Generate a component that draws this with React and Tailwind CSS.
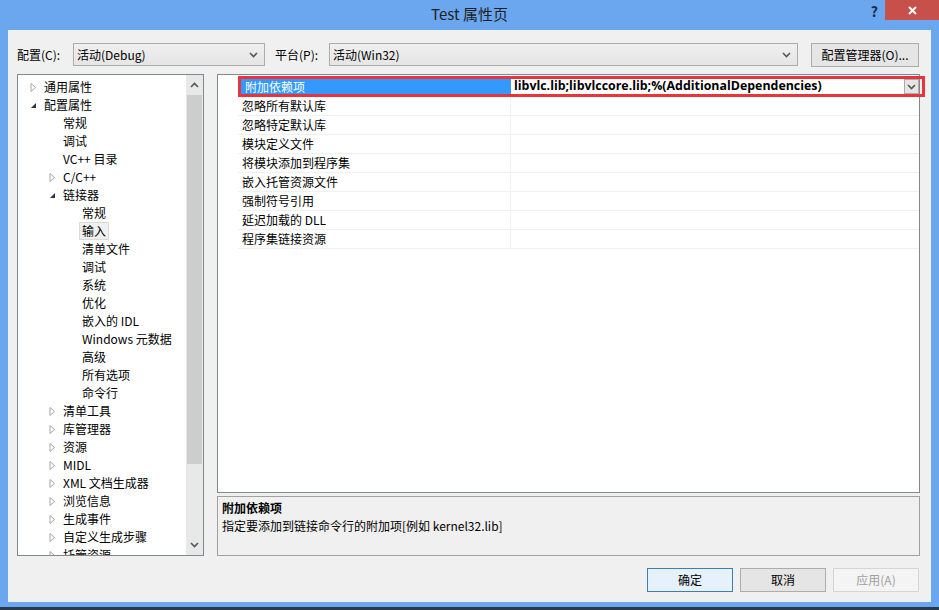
import React from 'react';

const font = { fontFamily: '"Noto Sans CJK SC", "Noto Sans", sans-serif' };

const treeItems = [
    { label: '通用属性', level: 0, arrow: 'closed' },
    { label: '配置属性', level: 0, arrow: 'open' },
    { label: '常规', level: 1 },
    { label: '调试', level: 1 },
    { label: 'VC++ 目录', level: 1 },
    { label: 'C/C++', level: 1, arrow: 'closed' },
    { label: '链接器', level: 1, arrow: 'open' },
    { label: '常规', level: 2 },
    { label: '输入', level: 2, selected: true },
    { label: '清单文件', level: 2 },
    { label: '调试', level: 2 },
    { label: '系统', level: 2 },
    { label: '优化', level: 2 },
    { label: '嵌入的 IDL', level: 2 },
    { label: 'Windows 元数据', level: 2 },
    { label: '高级', level: 2 },
    { label: '所有选项', level: 2 },
    { label: '命令行', level: 2 },
    { label: '清单工具', level: 1, arrow: 'closed' },
    { label: '库管理器', level: 1, arrow: 'closed' },
    { label: '资源', level: 1, arrow: 'closed' },
    { label: 'MIDL', level: 1, arrow: 'closed' },
    { label: 'XML 文档生成器', level: 1, arrow: 'closed' },
    { label: '浏览信息', level: 1, arrow: 'closed' },
    { label: '生成事件', level: 1, arrow: 'closed' },
    { label: '自定义生成步骤', level: 1, arrow: 'closed' },
    { label: '托管资源', level: 1, arrow: 'closed' },
];

const props = ['忽略所有默认库', '忽略特定默认库', '模块定义文件', '将模块添加到程序集', '嵌入托管资源文件', '强制符号引用', '延迟加载的 DLL', '程序集链接资源'];

function Chevron({ up }) {
    return (
        <svg width="9" height="6" viewBox="0 0 9 6">
            <path d={up ? 'M1 5 L4.5 1.5 L8 5' : 'M1 1 L4.5 4.5 L8 1'} fill="none" stroke="#555" strokeWidth="1.6" />
        </svg>
    );
}

function Arrow({ type }) {
    if (type === 'open') {
        return (
            <svg width="7" height="7" viewBox="0 0 7 7">
                <path d="M6 1 L6 6 L1 6 Z" fill="#333" />
            </svg>
        );
    }
    return (
        <svg width="7" height="9" viewBox="0 0 7 9">
            <path d="M1 0.5 L5.5 4.5 L1 8.5 Z" fill="none" stroke="#a6a6a6" strokeWidth="1" />
        </svg>
    );
}

function Combo({ text, width }) {
    return (
        <div className={`flex items-center h-[23px] border border-[#acacac] bg-gradient-to-b from-[#f0f0f0] to-[#e5e5e5] pl-[3px] pr-[6px] ${width}`}>
            <span className="flex-1 text-[12px] text-black">{text}</span>
            <Chevron />
        </div>
    );
}

function Button({ children, focused, disabled }) {
    return (
        <div
            className={`w-[86px] h-[24px] flex items-center justify-center text-[12px] border ${
                focused ? 'border-[#3c7fb1] bg-[#e5f1fb]' : disabled ? 'border-[#d5d5d5] bg-[#f4f4f4]' : 'border-[#acacac] bg-[#e5e5e5]'
            } ${disabled ? 'text-[#a0a0a0]' : 'text-black'}`}
        >
            {children}
        </div>
    );
}

export default function App() {
    return (
        <div className="w-[939px] h-[610px] bg-[#6aa7ef] flex flex-col overflow-hidden" style={font}>
            <div className="h-[30px] flex items-start relative">
                <div className="flex-1 text-center text-[15px] text-[#1e1e1e] pt-[3px]">Test 属性页</div>
                <div className="absolute right-[61px] top-[1px] text-[14px] font-bold text-[#1a2a4a]">?</div>
                <div className="absolute right-0 top-0 w-[54px] h-[20px] bg-[#c7504b] flex items-center justify-center">
                    <svg width="9" height="9" viewBox="0 0 9 9">
                        <path d="M1 1 L8 8 M8 1 L1 8" stroke="#fff" strokeWidth="2" />
                    </svg>
                </div>
            </div>
            <div className="mx-[8px] h-[572px] bg-[#f0f0f0] flex flex-col text-[12px] text-black">
                <div className="flex items-center mt-[13px] h-[23px] pl-[9px]">
                    <span className="w-[56px]">配置(C):</span>
                    <Combo text="活动(Debug)" width="w-[192px]" />
                    <span className="ml-[10px] w-[54px]">平台(P):</span>
                    <Combo text="活动(Win32)" width="w-[469px]" />
                    <div className="ml-[13px] w-[108px] h-[24px] border border-[#acacac] bg-[#e5e5e5] flex items-center justify-center">配置管理器(O)...</div>
                </div>
                <div className="flex mt-[8px] pl-[9px] h-[482px]">
                    <div className="w-[187px] h-full border border-[#828790] bg-white flex overflow-hidden">
                        <div className="flex-1 pt-[3px] overflow-hidden">
                            {treeItems.map((item, i) => (
                                <div key={i} className="h-[18px] flex items-center" style={{ paddingLeft: 8 + item.level * 19 }}>
                                    <div className="w-[15px] flex items-center justify-center">{item.arrow && <Arrow type={item.arrow} />}</div>
                                    <span className={`px-[2px] leading-[16px] whitespace-nowrap ${item.selected ? 'bg-[#f0f0f0] border border-[#dadada]' : 'border border-transparent'}`}>
                                        {item.label}
                                    </span>
                                </div>
                            ))}
                        </div>
                        <div className="w-[17px] bg-[#e8e8e8] flex flex-col">
                            <div className="h-[20px] flex items-center justify-center">
                                <Chevron up />
                            </div>
                            <div className="h-[369px] mx-[1px] bg-[#cdcdcd]" />
                            <div className="flex-1" />
                            <div className="h-[20px] flex items-center justify-center">
                                <Chevron />
                            </div>
                        </div>
                    </div>
                    <div className="ml-[13px] w-[703px] flex flex-col">
                        <div className="h-[420px] border border-[#828790] bg-white pt-[1px] relative">
                            <div className="flex h-[21px] items-stretch">
                                <div className="w-[20px]" />
                                <div className="w-[273px] bg-[#3399ff] text-white flex items-center pl-[4px] border-l-[3px] border-y-[3px] border-[#e8343c]">附加依赖项</div>
                                <div className="flex-1 flex items-center pl-[3px] pr-[1px] font-bold border-y-[3px] border-r-[3px] border-[#e8343c] -mr-[6px]" style={{ fontFamily: '"Open Sans", "Noto Sans", sans-serif' }}>
                                    <span className="flex-1 text-[12.4px]">libvlc.lib;libvlccore.lib;%(AdditionalDependencies)</span>
                                    <div className="w-[15px] h-[15px] mr-[2px] border border-[#acacac] bg-[#e5e5e5] flex items-center justify-center">
                                        <Chevron />
                                    </div>
                                </div>
                            </div>
                            {props.map((p, i) => (
                                <div key={i} className="flex h-[19px]">
                                    <div className="w-[20px]" />
                                    <div className="w-[273px] flex items-center pl-[4px] border-b border-r border-[#f0f0f0]">{p}</div>
                                    <div className="flex-1 border-b border-[#f0f0f0]" />
                                </div>
                            ))}
                        </div>
                        <div className="mt-[3px] h-[60px] border border-[#a0a0a0] bg-[#f0f0f0] px-[4px] pt-[2px]">
                            <div className="font-bold leading-[18px]">附加依赖项</div>
                            <div className="leading-[18px]">指定要添加到链接命令行的附加项[例如 kernel32.lib]</div>
                        </div>
                    </div>
                </div>
                <div className="flex justify-end gap-[7px] mt-[12px] pr-[12px]">
                    <Button focused>确定</Button>
                    <Button>取消</Button>
                    <Button disabled>应用(A)</Button>
                </div>
            </div>
            <div className="flex-1" />
            <div className="h-[3px] bg-[#2a3a4a]" />
        </div>
    );
}
